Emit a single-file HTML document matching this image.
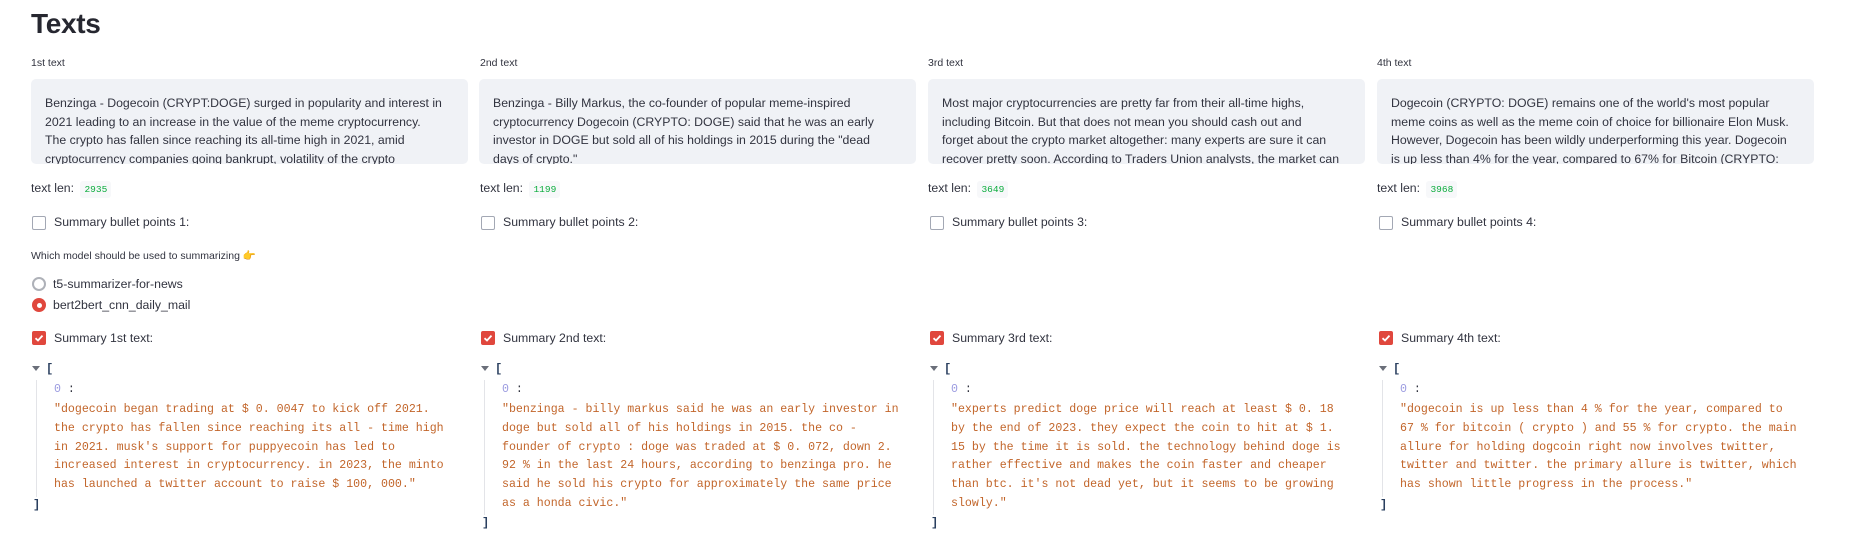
<!DOCTYPE html>
<html><head><meta charset="utf-8"><style>
*{margin:0;padding:0;box-sizing:border-box}
body{width:1850px;height:557px;background:#fff;font-family:"Liberation Sans",sans-serif;color:#31333f;position:relative;overflow:hidden}
.a{position:absolute;white-space:nowrap}
h1{position:absolute;left:31px;top:8px;font-size:28px;font-weight:bold;color:#262730;letter-spacing:-0.3px}
.lbl{font-size:10.5px;top:57px}
.ta{position:absolute;top:79px;width:437px;height:85px;background:#f0f2f6;border-radius:5px;overflow:hidden}
.ta div{position:absolute;left:14px;font-size:12.3px;white-space:nowrap;line-height:18.6px;top:15px;color:#31333f}
.len{font-size:12.3px;top:181px}
.len code{font-family:"Liberation Mono",monospace;font-size:9.5px;color:#09ab3b;background:#f7f8fa;padding:3px 4px;border-radius:3px;margin-left:3px}
.cb{position:absolute;width:14px;height:14px;border:1px solid #a3a8b4;border-radius:2px;background:#fff}
.cb.on{background:#e0473d;border-color:#e0473d}
.cbl{font-size:12.3px}
.json{font-family:"Liberation Mono",monospace;font-size:11.6px;color:#c2652a;line-height:18.8px}
.bar{position:absolute;width:1px;background:#e3e4e8}
.tri{position:absolute;width:0;height:0;border-left:4px solid transparent;border-right:4px solid transparent;border-top:5px solid #6b6f7a}
.br{font-family:"Liberation Mono",monospace;font-size:12px;color:#2a3f5f;font-weight:bold}
.idx{font-family:"Liberation Mono",monospace;font-size:11.6px;color:#9b9be0}
</style></head><body>
<h1>Texts</h1>

<div class="a lbl" style="left:31px">1st text</div>
<div class="a lbl" style="left:480px">2nd text</div>
<div class="a lbl" style="left:928px">3rd text</div>
<div class="a lbl" style="left:1377px">4th text</div>

<div class="ta" style="left:31px"><div>Benzinga - Dogecoin (CRYPT:DOGE) surged in popularity and interest in<br>2021 leading to an increase in the value of the meme cryptocurrency.<br>The crypto has fallen since reaching its all-time high in 2021, amid<br>cryptocurrency companies going bankrupt, volatility of the crypto</div></div>
<div class="ta" style="left:479px"><div>Benzinga - Billy Markus, the co-founder of popular meme-inspired<br>cryptocurrency Dogecoin (CRYPTO: DOGE) said that he was an early<br>investor in DOGE but sold all of his holdings in 2015 during the "dead<br>days of crypto."</div></div>
<div class="ta" style="left:928px"><div>Most major cryptocurrencies are pretty far from their all-time highs,<br>including Bitcoin. But that does not mean you should cash out and<br>forget about the crypto market altogether: many experts are sure it can<br>recover pretty soon. According to Traders Union analysts, the market can</div></div>
<div class="ta" style="left:1377px"><div>Dogecoin (CRYPTO: DOGE) remains one of the world's most popular<br>meme coins as well as the meme coin of choice for billionaire Elon Musk.<br>However, Dogecoin has been wildly underperforming this year. Dogecoin<br>is up less than 4% for the year, compared to 67% for Bitcoin (CRYPTO:</div></div>

<div class="a len" style="left:31px">text len: <code>2935</code></div>
<div class="a len" style="left:480px">text len: <code>1199</code></div>
<div class="a len" style="left:928px">text len: <code>3649</code></div>
<div class="a len" style="left:1377px">text len: <code>3968</code></div>

<div class="cb" style="left:32px;top:216px"></div><div class="a cbl" style="left:54px;top:215px">Summary bullet points 1:</div>
<div class="cb" style="left:481px;top:216px"></div><div class="a cbl" style="left:503px;top:215px">Summary bullet points 2:</div>
<div class="cb" style="left:930px;top:216px"></div><div class="a cbl" style="left:952px;top:215px">Summary bullet points 3:</div>
<div class="cb" style="left:1379px;top:216px"></div><div class="a cbl" style="left:1401px;top:215px">Summary bullet points 4:</div>

<div class="a" style="left:31px;top:249px;font-size:10.5px">Which model should be used to summarizing <span style="color:#f4a63a">👉</span></div>
<div class="a" style="left:32px;top:277px;width:14px;height:14px;border:2px solid #aeb1b8;border-radius:50%"></div>
<div class="a cbl" style="left:53px;top:277px">t5-summarizer-for-news</div>
<div class="a" style="left:32px;top:298px;width:14px;height:14px;border-radius:50%;background:#e0473d"><div style="position:absolute;left:4.5px;top:4.5px;width:5px;height:5px;border-radius:50%;background:#fff"></div></div>
<div class="a cbl" style="left:53px;top:298px">bert2bert_cnn_daily_mail</div>

<div class="cb on" style="left:32px;top:331px"><svg width="12" height="12" viewBox="0 0 12 12" style="position:absolute;left:0;top:0"><path d="M2.5 6.2 L5 8.5 L9.5 3.6" stroke="#fff" stroke-width="1.8" fill="none"/></svg></div>
<div class="a cbl" style="left:54px;top:331px">Summary 1st text:</div>
<div class="cb on" style="left:481px;top:331px"><svg width="12" height="12" viewBox="0 0 12 12" style="position:absolute;left:0;top:0"><path d="M2.5 6.2 L5 8.5 L9.5 3.6" stroke="#fff" stroke-width="1.8" fill="none"/></svg></div>
<div class="a cbl" style="left:503px;top:331px">Summary 2nd text:</div>
<div class="cb on" style="left:930px;top:331px"><svg width="12" height="12" viewBox="0 0 12 12" style="position:absolute;left:0;top:0"><path d="M2.5 6.2 L5 8.5 L9.5 3.6" stroke="#fff" stroke-width="1.8" fill="none"/></svg></div>
<div class="a cbl" style="left:952px;top:331px">Summary 3rd text:</div>
<div class="cb on" style="left:1379px;top:331px"><svg width="12" height="12" viewBox="0 0 12 12" style="position:absolute;left:0;top:0"><path d="M2.5 6.2 L5 8.5 L9.5 3.6" stroke="#fff" stroke-width="1.8" fill="none"/></svg></div>
<div class="a cbl" style="left:1401px;top:331px">Summary 4th text:</div>

<div class="tri" style="left:32px;top:366px"></div><div class="a br" style="left:46px;top:362px">[</div>
<div class="bar" style="left:36px;top:380px;height:117px"></div>
<div class="a idx" style="left:54px;top:383px">0 <span style="color:#31333f">:</span></div>
<div class="a json" style="left:54px;top:401px">"dogecoin began trading at $ 0. 0047 to kick off 2021.<br>the crypto has fallen since reaching its all - time high<br>in 2021. musk's support for puppyecoin has led to<br>increased interest in cryptocurrency. in 2023, the minto<br>has launched a twitter account to raise $ 100, 000."</div>
<div class="a br" style="left:33px;top:498px">]</div>

<div class="tri" style="left:481px;top:366px"></div><div class="a br" style="left:495px;top:362px">[</div>
<div class="bar" style="left:484px;top:380px;height:135px"></div>
<div class="a idx" style="left:502px;top:383px">0 <span style="color:#31333f">:</span></div>
<div class="a json" style="left:502px;top:401px">"benzinga - billy markus said he was an early investor in<br>doge but sold all of his holdings in 2015. the co -<br>founder of crypto : doge was traded at $ 0. 072, down 2.<br>92 % in the last 24 hours, according to benzinga pro. he<br>said he sold his crypto for approximately the same price<br>as a honda civic."</div>
<div class="a br" style="left:482px;top:516px">]</div>

<div class="tri" style="left:930px;top:366px"></div><div class="a br" style="left:944px;top:362px">[</div>
<div class="bar" style="left:933px;top:380px;height:135px"></div>
<div class="a idx" style="left:951px;top:383px">0 <span style="color:#31333f">:</span></div>
<div class="a json" style="left:951px;top:401px">"experts predict doge price will reach at least $ 0. 18<br>by the end of 2023. they expect the coin to hit at $ 1.<br>15 by the time it is sold. the technology behind doge is<br>rather effective and makes the coin faster and cheaper<br>than btc. it's not dead yet, but it seems to be growing<br>slowly."</div>
<div class="a br" style="left:931px;top:516px">]</div>

<div class="tri" style="left:1379px;top:366px"></div><div class="a br" style="left:1393px;top:362px">[</div>
<div class="bar" style="left:1382px;top:380px;height:117px"></div>
<div class="a idx" style="left:1400px;top:383px">0 <span style="color:#31333f">:</span></div>
<div class="a json" style="left:1400px;top:401px">"dogecoin is up less than 4 % for the year, compared to<br>67 % for bitcoin ( crypto ) and 55 % for crypto. the main<br>allure for holding dogcoin right now involves twitter,<br>twitter and twitter. the primary allure is twitter, which<br>has shown little progress in the process."</div>
<div class="a br" style="left:1380px;top:498px">]</div>
</body></html>
